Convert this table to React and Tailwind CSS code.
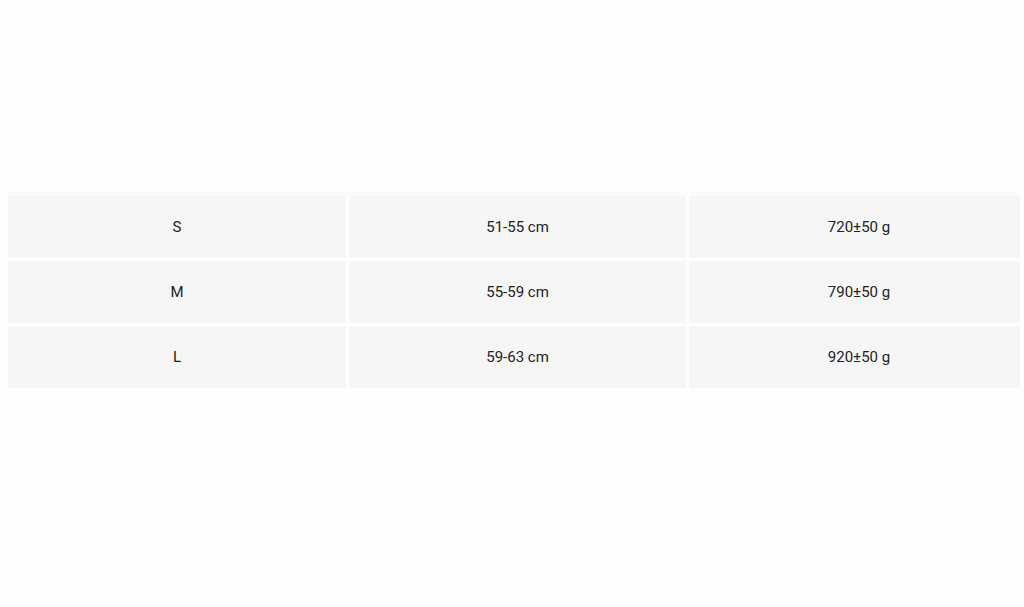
export default function App() {
  const rows = [
    ["S", "51-55 cm", "720±50 g"],
    ["M", "55-59 cm", "790±50 g"],
    ["L", "59-63 cm", "920±50 g"],
  ];
  return (
    <div
      className="w-[1024px] h-[607px] bg-[#fefefe] pt-[192px] px-[8px]"
      style={{ fontFamily: "Roboto, 'Liberation Sans', sans-serif" }}
    >
      <div className="w-[1012px] h-[3px] bg-[#fafafa]" />
      <div className="grid grid-cols-[338px_337px_331px] gap-[3px] pt-[1px] text-[15px] text-[#222]">
        {rows.map((r, i) => (
          <div key={i} className="contents">
            <div className="h-[62px] bg-[#f6f6f6] flex items-center justify-center pt-[1px]">{r[0]}</div>
            <div className="h-[62px] bg-[#f6f6f6] flex items-center justify-center pt-[1px]">{r[1]}</div>
            <div className="h-[62px] bg-[#f6f6f6] flex items-center justify-center pl-[9px] pt-[1px]">{r[2]}</div>
          </div>
        ))}
      </div>
    </div>
  );
}
